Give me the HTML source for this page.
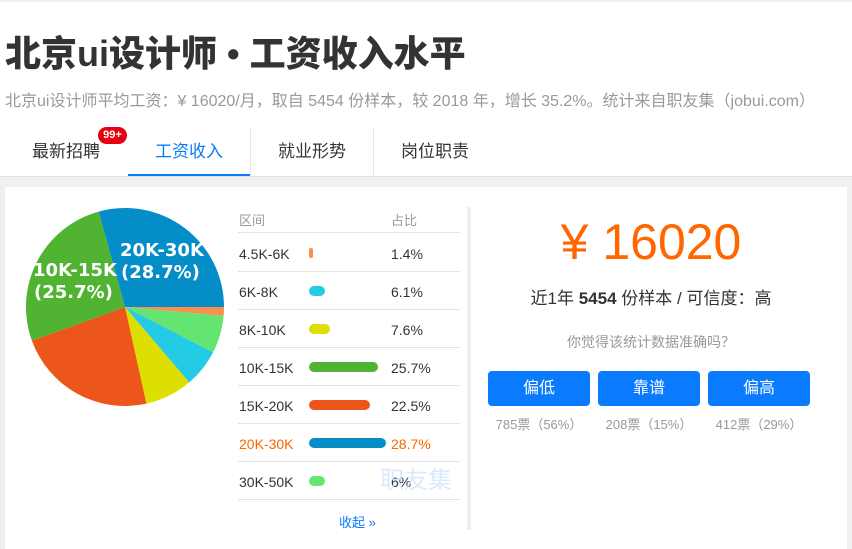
<!DOCTYPE html>
<html><head><meta charset="utf-8"><style>
*{margin:0;padding:0;box-sizing:border-box}
body{width:852px;height:549px;overflow:hidden;background:#fff;font-family:"Liberation Sans","Noto Sans CJK SC",sans-serif;position:relative;color:#333}
.a{position:absolute;white-space:nowrap}
.title{left:5px;top:25px;font-size:36px;font-weight:900;color:#333;letter-spacing:0px}
.sub{left:5px;top:87px;font-size:16px;color:#999}
.tab{top:129px;height:48px;line-height:46px;font-size:17px;text-align:center;color:#333}
.div{top:129px;width:1px;height:47px;background:#e5e5e5}
.gray{left:0;top:176px;width:852px;height:373px;background:#f0f0f0;border-top:1px solid #e0e0e0}
.panel{left:5px;top:187px;width:842px;height:362px;background:#fff}
.row{left:238px;width:222px;height:38px;border-bottom:1px solid #e3e3e3;font-size:14px}
.row span{position:absolute;top:12px}
.bar{position:absolute;top:14px;left:71px;height:10px;border-radius:5px}
.btn{top:371px;width:102px;height:35px;background:#0a7bff;border-radius:4px;color:#fff;font-size:16px;text-align:center;line-height:35px}
.v{top:414px;width:102px;text-align:center;font-size:13px;color:#999}
</style></head><body>
<div class="a" style="left:0;top:0;width:852px;height:2px;background:#f0f0f0"></div>
<div class="a title">北京ui设计师 • 工资收入水平</div>
<div class="a sub">北京ui设计师平均工资：¥ 16020/月，取自 5454 份样本，较 2018 年，增长 35.2%。统计来自职友集（jobui.com）</div>
<div class="a tab" style="left:5px;width:122px">最新招聘</div>
<div class="a" style="left:98px;top:127px;width:29px;height:17px;background:#e60012;border-radius:9px;color:#fff;font-size:11px;font-weight:bold;text-align:center;line-height:17px">99+</div>
<div class="a tab" style="left:128px;width:122px;color:#0a7bff;border-bottom:3px solid #0a7bff">工资收入</div>
<div class="a div" style="left:250px"></div>
<div class="a tab" style="left:251px;width:122px">就业形势</div>
<div class="a div" style="left:373px"></div>
<div class="a tab" style="left:374px;width:122px">岗位职责</div>
<div class="a gray"></div>
<div class="a panel"></div>
<svg class="a" style="left:0;top:0" width="240" height="420" viewBox="0 0 240 420">
<path d="M125 307 L224 307 A99 99 0 0 1 223.6 315.87Z" fill="#fb8f4e"/>
<path d="M125 307 L223.6 315.87 A99 99 0 0 1 213.07 352.22Z" fill="#64e572"/>
<path d="M125 307 L213.07 352.22 A99 99 0 0 1 189.15 382.4Z" fill="#24cbe5"/>
<path d="M125 307 L189.15 382.4 A99 99 0 0 1 146.41 403.65Z" fill="#dddf00"/>
<path d="M125 307 L146.41 403.65 A99 99 0 0 1 31.87 340.6Z" fill="#ed561b"/>
<path d="M125 307 L31.87 340.6 A99 99 0 0 1 98.66 211.57Z" fill="#50b432"/>
<path d="M125 307 L98.66 211.57 A99 99 0 0 1 224 307Z" fill="#058dc7"/>
<g fill="#fff" font-family="DejaVu Sans,sans-serif" font-weight="bold" font-size="18">
<text x="120" y="256">20K-30K</text><text x="121" y="278">(28.7%)</text>
<text x="33" y="276">10K-15K</text><text x="34" y="298">(25.7%)</text></g>
</svg>
<div class="a" style="left:238px;top:207px;width:222px;height:26px;border-bottom:1px solid #e3e3e3;font-size:13px;color:#999"><span class="a" style="left:1px;top:3px">区间</span><span class="a" style="left:153px;top:3px">占比</span></div>
<div class="a row" style="top:234px"><span style="left:1px">4.5K-6K</span><i class="bar" style="width:4px;background:#fb8f4e"></i><span style="left:153px">1.4%</span></div>
<div class="a row" style="top:272px"><span style="left:1px">6K-8K</span><i class="bar" style="width:16px;background:#24cbe5"></i><span style="left:153px">6.1%</span></div>
<div class="a row" style="top:310px"><span style="left:1px">8K-10K</span><i class="bar" style="width:21px;background:#dddf00"></i><span style="left:153px">7.6%</span></div>
<div class="a row" style="top:348px"><span style="left:1px">10K-15K</span><i class="bar" style="width:69px;background:#50b432"></i><span style="left:153px">25.7%</span></div>
<div class="a row" style="top:386px"><span style="left:1px">15K-20K</span><i class="bar" style="width:61px;background:#ed561b"></i><span style="left:153px">22.5%</span></div>
<div class="a row" style="top:424px;color:#ff6600"><span style="left:1px">20K-30K</span><i class="bar" style="width:77px;background:#058dc7"></i><span style="left:153px">28.7%</span></div>
<div class="a row" style="top:462px"><span style="left:1px">30K-50K</span><i class="bar" style="width:16px;background:#64e572"></i><span style="left:153px">6%</span></div>
<div class="a" style="left:380px;top:460px;font-size:24px;color:#cfe6fb;opacity:.8">职友集</div>
<div class="a" style="left:339px;top:512px;font-size:13px;color:#0a7bff">收起 »</div>
<div class="a" style="left:467px;top:207px;width:4px;height:323px;background:#eee"></div>
<div class="a" style="left:471px;top:212px;width:360px;text-align:center;font-size:50px;color:#ff6600;line-height:60px">¥ 16020</div>
<div class="a" style="left:471px;top:284px;width:360px;text-align:center;font-size:17px;color:#333">近1年 <b style="font-weight:600">5454</b> 份样本 / 可信度：高</div>
<div class="a" style="left:471px;top:332px;width:360px;text-align:center;font-size:14px;color:#999">你觉得该统计数据准确吗？</div>
<div class="a btn" style="left:488px">偏低</div><div class="a btn" style="left:598px">靠谱</div><div class="a btn" style="left:708px">偏高</div>
<div class="a v" style="left:488px">785票（56%）</div><div class="a v" style="left:598px">208票（15%）</div><div class="a v" style="left:708px">412票（29%）</div>
</body></html>
